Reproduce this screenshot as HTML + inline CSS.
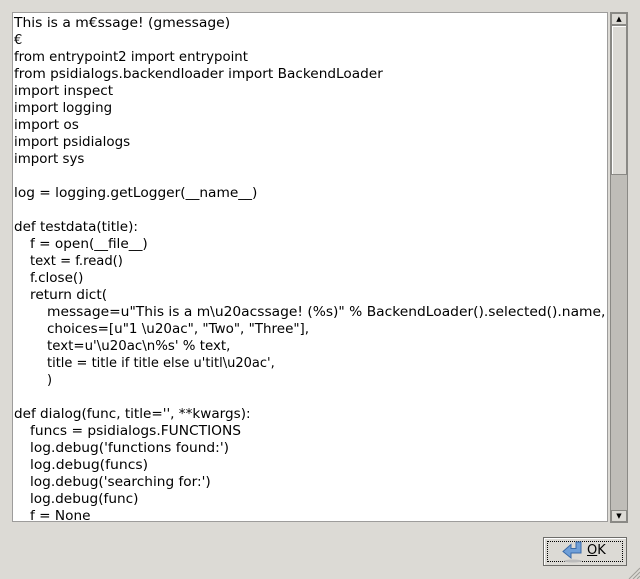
<!DOCTYPE html>
<html><head><meta charset="utf-8"><style>
html,body{margin:0;padding:0}
body{width:640px;height:579px;background:#dcdad5;position:relative;overflow:hidden;font-family:"DejaVu Sans","Liberation Sans",sans-serif}
#box{position:absolute;left:12px;top:12px;width:596px;height:510px;background:#fff;border:1px solid #9d9c9b;box-sizing:border-box;overflow:hidden}
#txt{position:absolute;left:1px;top:2px;width:700px;font-size:13px;line-height:17px;color:#000}
#txt div{height:17px;white-space:nowrap}
#txt span{display:inline-block;transform-origin:0 50%;white-space:pre}
.i1{padding-left:16px}.i2{padding-left:33px}
#sb{position:absolute;left:610px;top:12px;width:18px;height:511px;background:#bfbdb8;border:1px solid #8a8985;box-sizing:border-box}
.ar{position:absolute;left:0;width:16px;height:12px;background:#dcdad5;border:1px solid #8a8985;box-sizing:border-box;font-size:7px;line-height:10px;text-align:center;color:#000}
#thumb{position:absolute;left:0;top:12px;width:16px;height:150px;background:#dcdad5;border:1px solid #8a8985;box-sizing:border-box;box-shadow:inset 1px 1px 0 #fff}
#btn{position:absolute;left:543px;top:537px;width:84px;height:29px;border:1px solid #6e6d6a;box-sizing:border-box;background:#dcdad5;box-shadow:inset 1px 1px 0 #fff}
#btn .f{position:absolute;left:3px;top:3px;right:3px;bottom:3px;border:1px dotted #000}
#btn .l{position:absolute;left:43px;top:5px;font-size:13px;color:#000}
</style></head><body>
<div id="box"><div id="txt"><div><span style="transform:scaleX(1.069)">This is a m€ssage! (gmessage)</span></div><div><span>€</span></div><div><span style="transform:scaleX(1.022)">from entrypoint2 import entrypoint</span></div><div><span style="transform:scaleX(1.051)">from psidialogs.backendloader import BackendLoader</span></div><div><span style="transform:scaleX(1.053)">import inspect</span></div><div><span style="transform:scaleX(1.03)">import logging</span></div><div><span style="transform:scaleX(1.05)">import os</span></div><div><span style="transform:scaleX(1.036)">import psidialogs</span></div><div><span style="transform:scaleX(1.03)">import sys</span></div><div></div><div><span style="transform:scaleX(1.056)">log = logging.getLogger(__name__)</span></div><div></div><div><span style="transform:scaleX(1.04)">def testdata(title):</span></div><div class="i1"><span style="transform:scaleX(1.05)">f = open(__file__)</span></div><div class="i1"><span style="transform:scaleX(1.01)">text = f.read()</span></div><div class="i1"><span style="transform:scaleX(1.04)">f.close()</span></div><div class="i1"><span style="transform:scaleX(1.055)">return dict(</span></div><div class="i2"><span style="transform:scaleX(1.063)">message=u"This is a m\u20acssage! (%s)" % BackendLoader().selected().name,</span></div><div class="i2"><span style="transform:scaleX(1.036)">choices=[u"1 \u20ac", "Two", "Three"],</span></div><div class="i2"><span style="transform:scaleX(1.028)">text=u'\u20ac\n%s' % text,</span></div><div class="i2"><span>title = title if title else u'titl\u20ac',</span></div><div class="i2"><span>)</span></div><div></div><div><span style="transform:scaleX(1.044)">def dialog(func, title='', **kwargs):</span></div><div class="i1"><span style="transform:scaleX(1.06)">funcs = psidialogs.FUNCTIONS</span></div><div class="i1"><span style="transform:scaleX(1.059)">log.debug('functions found:')</span></div><div class="i1"><span style="transform:scaleX(1.073)">log.debug(funcs)</span></div><div class="i1"><span style="transform:scaleX(1.053)">log.debug('searching for:')</span></div><div class="i1"><span style="transform:scaleX(1.05)">log.debug(func)</span></div><div class="i1"><span style="transform:scaleX(1.05)">f = None</span></div></div></div>
<div id="sb"><div class="ar" style="top:0">▲</div><div id="thumb"></div><div class="ar" style="bottom:0">▼</div></div>
<div id="btn"><div class="f"></div>
<svg style="position:absolute;left:17px;top:3px" width="26" height="22" viewBox="0 0 26 22"><path d="M15 1h5v11H10v5L2 10.5l8-7v4h5z" fill="#6f9fd8" stroke="#3a6aa8" stroke-width="1"/><ellipse cx="12" cy="20" rx="9" ry="1.5" fill="#bbb"/></svg>
<span class="l"><u>O</u>K</span></div>
<svg style="position:absolute;left:627px;top:566px" width="13" height="13"><path d="M2 13L13 2M6 13L13 6M10 13L13 10" stroke="#a09e99" stroke-width="1"/></svg>
</body></html>
